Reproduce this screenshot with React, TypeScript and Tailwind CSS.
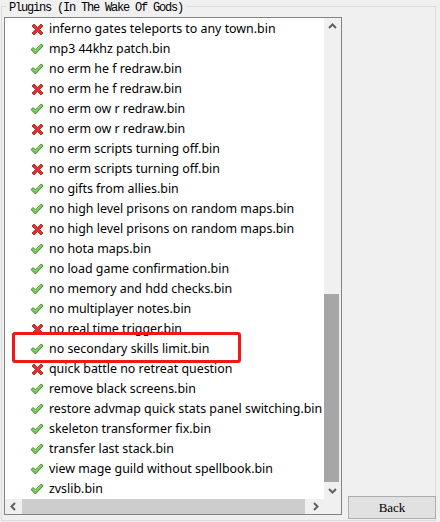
const items: [string, boolean][] = [
  ["inferno gates teleports to any town.bin", false],
  ["mp3 44khz patch.bin", true],
  ["no erm he f redraw.bin", true],
  ["no erm he f redraw.bin", false],
  ["no erm ow r redraw.bin", true],
  ["no erm ow r redraw.bin", false],
  ["no erm scripts turning off.bin", true],
  ["no erm scripts turning off.bin", false],
  ["no gifts from allies.bin", true],
  ["no high level prisons on random maps.bin", true],
  ["no high level prisons on random maps.bin", false],
  ["no hota maps.bin", true],
  ["no load game confirmation.bin", true],
  ["no memory and hdd checks.bin", true],
  ["no multiplayer notes.bin", true],
  ["no real time trigger.bin", false],
  ["no secondary skills limit.bin", true],
  ["quick battle no retreat question", false],
  ["remove black screens.bin", true],
  ["restore advmap quick stats panel switching.bin", true],
  ["skeleton transformer fix.bin", true],
  ["transfer last stack.bin", true],
  ["view mage guild without spellbook.bin", true],
  ["zvslib.bin", true],
];

function Check() {
  return (
    <svg width="14" height="12" viewBox="0 0 14 12">
      <path
        d="M1 6.5 L3.2 4.6 L5.4 7 L11.2 1 L13.2 2.8 L5.4 11 Z"
        fill="#77c450"
        stroke="#3f8f2a"
        strokeWidth="1"
        strokeLinejoin="round"
      />
      <path d="M3.2 5.6 L5.4 8 L11.2 2" fill="none" stroke="#a8e08a" strokeWidth="0.8" />
    </svg>
  );
}

function Cross() {
  return (
    <svg width="13" height="13" viewBox="0 0 13 13">
      <path
        d="M1 3 L3 1 L6.5 4.5 L10 1 L12 3 L8.5 6.5 L12 10 L10 12 L6.5 8.5 L3 12 L1 10 L4.5 6.5 Z"
        fill="#e2302f"
        stroke="#a81a1a"
        strokeWidth="0.8"
        strokeLinejoin="round"
      />
    </svg>
  );
}

function Arrow({ dir }: { dir: "up" | "down" | "left" | "right" }) {
  const d = {
    up: "M1 6 L4.5 2.5 L8 6",
    down: "M1 3 L4.5 6.5 L8 3",
    left: "M6 1 L2.5 4.5 L6 8",
    right: "M3 1 L6.5 4.5 L3 8",
  }[dir];
  return (
    <svg width="9" height="9" viewBox="0 0 9 9">
      <path d={d} fill="none" stroke="#606060" strokeWidth="2" />
    </svg>
  );
}

export default function App() {
  return (
    <div className="w-[440px] h-[522px] bg-[#f0f0f0] pt-[6px] pl-[1px] pr-[4px] pb-[1px] font-['Noto_Sans',sans-serif] text-black overflow-hidden">
      <div className="relative h-full border border-[#dcdcdc] flex">
        <div className="absolute -top-[6px] left-[4px] bg-[#f0f0f0] px-[3px] font-['Liberation_Mono',monospace] text-[12px] leading-[14px] tracking-[-1.2px] text-black">
          Plugins (In The Wake Of Gods)
        </div>

        <div className="ml-[2px] mt-[10px] mb-[5px] w-[338px] border border-[#828282] bg-white flex flex-col">
          <div className="flex flex-1 min-h-0">
            <div className="relative flex-1 overflow-hidden pt-[1px]">
              {items.map(([name, ok], i) => (
                <div key={i} className="h-[20px] flex items-center pl-[25px] whitespace-nowrap">
                  <div className="w-[14px] flex justify-center">{ok ? <Check /> : <Cross />}</div>
                  <span className="ml-[5px] text-[12.4px] leading-[20px]">{name}</span>
                </div>
              ))}
              <div className="absolute left-[7px] top-[314px] w-[229px] h-[31px] border-[3px] border-[#f01818] rounded-[3px]" />
            </div>
            <div className="w-[17px] bg-[#f0f0f0] flex flex-col">
              <div className="h-[17px] flex items-center justify-center">
                <Arrow dir="up" />
              </div>
              <div className="flex-1 flex flex-col justify-end">
                <div className="h-[188px] w-[15px] bg-[#a6a6a6]" />
              </div>
              <div className="h-[17px] flex items-center justify-center">
                <Arrow dir="down" />
              </div>
            </div>
          </div>
          <div className="h-[15px] flex">
            <div className="flex-1 bg-[#f0f0f0] flex">
              <div className="w-[17px] flex items-center justify-center">
                <Arrow dir="left" />
              </div>
              <div className="flex-1 flex items-stretch pr-[2px]">
                <div className="flex-1 bg-[#cdcdcd]" />
              </div>
              <div className="w-[17px] flex items-center justify-center">
                <Arrow dir="right" />
              </div>
            </div>
            <div className="w-[17px] bg-[#f0f0f0]" />
          </div>
        </div>

        <div className="flex-1 flex flex-col justify-end items-end pb-[1px] pr-[0px]">
          <button className="w-[88px] h-[23px] bg-[#e1e1e1] border border-[#adadad] font-['Liberation_Serif',serif] text-[13px] leading-[21px] text-black -mr-[1px]">
            Back
          </button>
        </div>
      </div>
    </div>
  );
}
